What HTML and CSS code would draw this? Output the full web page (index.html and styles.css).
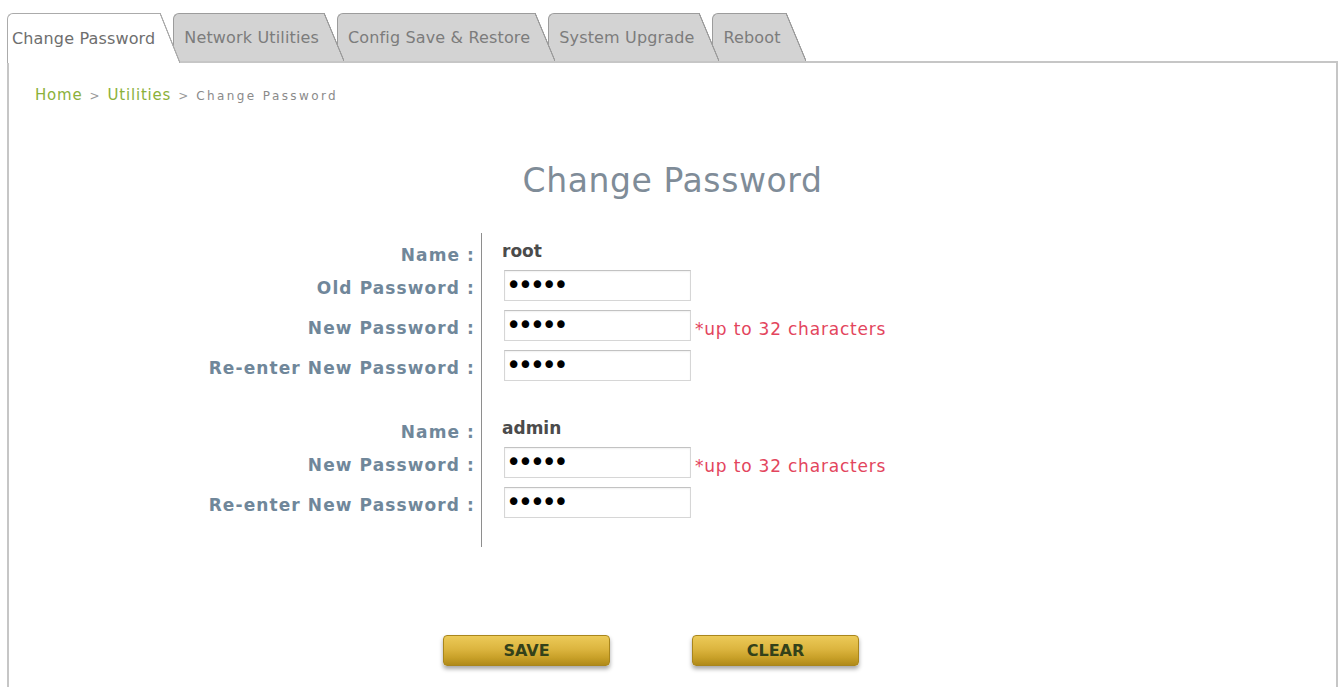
FILE: index.html
```html
<!DOCTYPE html>
<html lang="en">
<head>
<meta charset="utf-8">
<title>Change Password</title>
<link rel="stylesheet" href="styles.css">
</head>
<body>
<div class="page">
  <nav class="tabs">
    <div class="tab active z5"><span class="tab-body first">Change Password</span><span class="tab-slant"></span></div>
    <div class="tab z4"><span class="tab-body">Network Utilities</span><span class="tab-slant"></span></div>
    <div class="tab z3"><span class="tab-body">Config Save &amp; Restore</span><span class="tab-slant"></span></div>
    <div class="tab z2"><span class="tab-body">System Upgrade</span><span class="tab-slant"></span></div>
    <div class="tab z1"><span class="tab-body">Reboot</span><span class="tab-slant"></span></div>
  </nav>
  <main class="panel">
    <div class="crumbs"><span class="crumb-link">Home</span><span class="sep">&gt;</span><span class="crumb-link">Utilities</span><span class="sep">&gt;</span><span class="crumb-current">Change Password</span></div>
    <h1 class="title">Change Password</h1>
    <form class="pw-form">
      <div class="lbl name-row">Name :</div>
      <div class="val name-row"><span class="user">root</span></div>
      <div class="lbl">Old Password :</div>
      <div class="val"><input class="field" type="password" value="12345"></div>
      <div class="lbl">New Password :</div>
      <div class="val"><input class="field" type="password" value="12345"><span class="hint">*up to 32 characters</span></div>
      <div class="lbl">Re-enter New Password :</div>
      <div class="val"><input class="field" type="password" value="12345"></div>
      <div class="lbl spacer"></div>
      <div class="val spacer"></div>
      <div class="lbl name-row">Name :</div>
      <div class="val name-row"><span class="user">admin</span></div>
      <div class="lbl">New Password :</div>
      <div class="val"><input class="field" type="password" value="12345"><span class="hint">*up to 32 characters</span></div>
      <div class="lbl">Re-enter New Password :</div>
      <div class="val"><input class="field" type="password" value="12345"></div>
      <div class="lbl spacer"></div>
      <div class="val spacer"></div>
    </form>
    <div class="actions">
      <button class="btn" type="button">SAVE</button>
      <button class="btn" type="button">CLEAR</button>
    </div>
  </main>
</div>
</body>
</html>
```

FILE: styles.css
```css
html, body {
  margin: 0;
  padding: 0;
  background: #ffffff;
  overflow: hidden;
}

body {
  font-family: "DejaVu Sans", Verdana, sans-serif;
}

.page {
  padding: 13px 5px 0 7px;
  height: 687px;
  box-sizing: border-box;
  display: flex;
  flex-direction: column;
}

/* ---------- tabs ---------- */
.tabs {
  display: flex;
  height: 48px;
  align-items: flex-start;
}

.tab {
  display: flex;
  height: 48px;
  margin-right: -7px;
  position: relative;
}

.z5 { z-index: 5; }
.z4 { z-index: 4; }
.z3 { z-index: 3; }
.z2 { z-index: 2; }
.z1 { z-index: 1; }

.tab-body {
  display: flex;
  align-items: center;
  padding: 0 5px 0 10px;
  background: #d3d3d3;
  border-top: 1px solid #9c9c9c;
  border-left: 1px solid #9c9c9c;
  border-top-left-radius: 6px;
  font-size: 16px;
  letter-spacing: 0.15px;
  color: #7c7c7c;
  white-space: nowrap;
}

.tab-body.first {
  padding-left: 4px;
}

.tab-slant {
  width: 20px;
  background: linear-gradient(to bottom left,
    rgba(255,255,255,0) calc(50% - 0.9px),
    #9c9c9c calc(50% - 0.4px),
    #9c9c9c calc(50% + 0.4px),
    #d3d3d3 calc(50% + 0.9px));
}

.tab.active {
  height: 50px;
  margin-bottom: -2px;
}

.tab.active .tab-body {
  background: #ffffff;
  border-color: #ababab;
  color: #6e6e6e;
}

.tab.active .tab-slant {
  background: linear-gradient(to bottom left,
    rgba(255,255,255,0) calc(50% - 0.9px),
    #ababab calc(50% - 0.4px),
    #ababab calc(50% + 0.4px),
    #ffffff calc(50% + 0.9px));
}

/* ---------- panel ---------- */
.panel {
  flex: 1;
  border: 2px solid #c6c6c6;
  border-bottom: none;
  display: flex;
  flex-direction: column;
}

.crumbs {
  margin: 22px 0 0 26px;
  height: 20px;
  line-height: 20px;
  font-size: 15px;
  display: flex;
  align-items: baseline;
}

.crumb-link {
  color: #8bb13a;
  letter-spacing: 0.8px;
}

.sep {
  color: #9a9a9a;
  font-size: 12px;
  margin: 0 8px 0 7px;
}

.crumb-current {
  color: #8a8a8a;
  font-size: 12px;
  letter-spacing: 2.4px;
}

.title {
  margin: 56px 0 0 0;
  height: 40px;
  line-height: 40px;
  text-align: center;
  font-size: 33px;
  font-weight: normal;
  letter-spacing: 0.6px;
  color: #7f8c98;
}

/* ---------- form ---------- */
.pw-form {
  margin: 32px 0 0 191px;
  display: grid;
  grid-template-columns: 281px 400px;
  grid-template-rows: 32px 40px 40px 40px 25px 32px 40px 40px 25px;
}

.lbl {
  box-sizing: border-box;
  padding: 5px 6px 0 0;
  display: flex;
  align-items: center;
  justify-content: flex-end;
  font-size: 17px;
  line-height: 20px;
  font-weight: bold;
  letter-spacing: 1.1px;
  color: #70879a;
  white-space: nowrap;
}

.val {
  border-left: 1px solid #8e8e8e;
  padding-left: 22px;
  display: flex;
  align-items: center;
}

.lbl.name-row {
  padding-top: 0;
  align-items: flex-end;
}

.val.name-row {
  align-items: flex-end;
  padding-left: 20px;
  padding-bottom: 4px;
}

.user {
  font-size: 17px;
  line-height: 20px;
  font-weight: bold;
  color: #4b4b4b;
}

.field {
  box-sizing: border-box;
  width: 187px;
  height: 31px;
  margin: 0;
  padding: 0 0 0 1px;
  border: 1px solid #d6d6d6;
  border-top-color: #c2c2c2;
  box-shadow: inset 0 1px 2px rgba(0,0,0,0.06);
  background: #ffffff;
  font-family: "DejaVu Sans", sans-serif;
  font-size: 26px;
  letter-spacing: -3.5px;
  color: #000000;
  outline: none;
}

.hint {
  margin-left: 4px;
  padding-top: 7px;
  font-size: 17px;
  letter-spacing: 0.8px;
  color: #e3455d;
  white-space: nowrap;
}

/* ---------- buttons ---------- */
.actions {
  margin: 88px 0 0 434px;
  display: flex;
  gap: 82px;
}

.btn {
  width: 167px;
  height: 31px;
  border: 1px solid #a9861c;
  border-radius: 4px;
  background: linear-gradient(#ecca58 0%, #dcb53f 45%, #c8a028 75%, #b08a1a 100%);
  box-shadow: 0 3px 4px rgba(0,0,0,0.35);
  font-family: "DejaVu Sans", sans-serif;
  font-size: 16px;
  font-weight: bold;
  color: #33411a;
  padding: 0;
  cursor: pointer;
}
```
